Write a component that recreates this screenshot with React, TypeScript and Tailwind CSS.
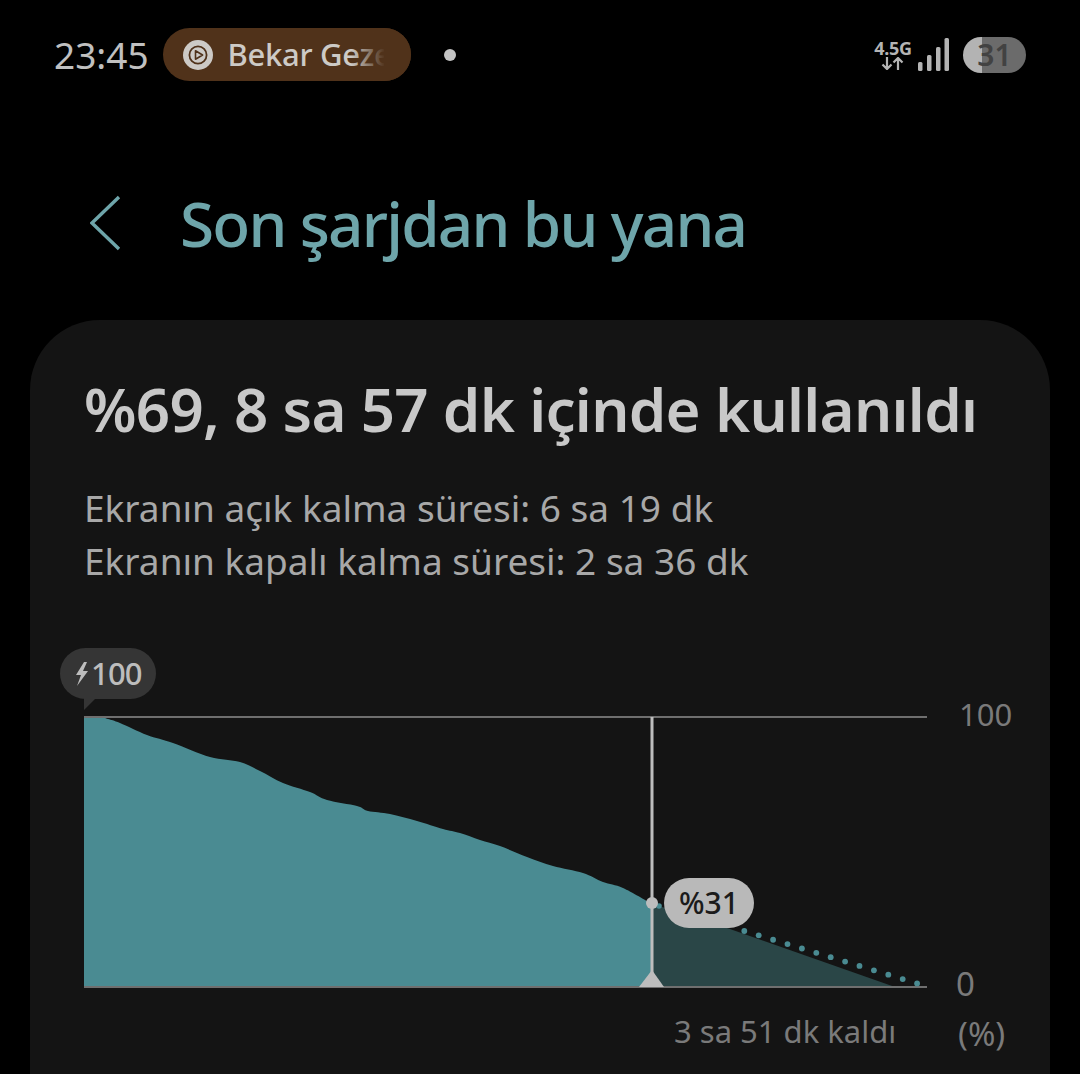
const pts: [number, number][] = [[84,717],[100,717],[108,719],[120,723],[147,735],[173,743],[210,757],[240,762],[260,771],[283,783],[310,792],[327,800],[357,806],[368,811],[390,814],[417,821],[443,829],[460,833],[480,840],[500,846],[527,857],[553,866],[583,873],[603,882],[623,888],[652,904]];
const curve = pts.reduce((acc, p, i) => {
  if (i === 0) return `M${p[0]} ${p[1]}`;
  const p0 = pts[Math.max(i - 2, 0)];
  const p1 = pts[i - 1];
  const p3 = pts[Math.min(i + 1, pts.length - 1)];
  const c1x = p1[0] + (p[0] - p0[0]) / 6;
  const c1y = p1[1] + (p[1] - p0[1]) / 6;
  const c2x = p[0] - (p3[0] - p1[0]) / 6;
  const c2y = p[1] - (p3[1] - p1[1]) / 6;
  return `${acc} C${c1x} ${c1y} ${c2x} ${c2y} ${p[0]} ${p[1]}`;
}, "");
const dots = Array.from({ length: 13 }, (_, i) => ({ x: 744.3 + i * 14.4, y: 931 + i * 4.37 }));

function StatusBar() {
  return (
    <div className="flex h-[109px] items-center pl-[54px] pr-[54px] text-[#c0c0c0]">
      <span className="text-[37px] leading-none">23:45</span>
      <div className="relative ml-[14px] flex h-[53px] w-[248px] items-center overflow-hidden rounded-full bg-[#50321a] pl-[20px]">
        <svg width="30" height="30" viewBox="0 0 30 30" className="shrink-0">
          <circle cx="15" cy="15" r="15" fill="#cdcac6" />
          <circle cx="15" cy="15" r="8.6" fill="none" stroke="#50321a" strokeWidth="1.8" />
          <path d="M12.5 10.8 L19.6 15 L12.5 19.2 Z" fill="none" stroke="#50321a" strokeWidth="1.6" strokeLinejoin="round" />
        </svg>
        <span className="ml-[15px] whitespace-nowrap text-[31px] font-medium leading-none tracking-[-0.3px] text-[#cdcac6]">Bekar Gezer</span>
        <div className="absolute inset-y-0 right-[26px] w-[34px] bg-gradient-to-r from-transparent to-[#50321a]" />
        <div className="absolute inset-y-0 right-0 w-[27px] bg-[#50321a]" />
      </div>
      <div className="ml-[33px] h-[12px] w-[12px] rounded-full bg-[#c4c4c4]" />
      <div className="ml-auto flex items-center">
        <div className="flex w-[42px] flex-col items-center">
          <span className="text-[18px] font-bold leading-[17px] tracking-[-0.3px] text-[#b4b4b4]">4.5G</span>
          <svg width="24" height="13" viewBox="0 0 24 13" fill="none" stroke="#b4b4b4" strokeWidth="2.2">
            <path d="M6 0 V12 M1.5 7.5 L6 12 L10.5 7.5 M17 13 V1 M12.5 5.5 L17 1 L21.5 5.5" />
          </svg>
        </div>
        <svg width="32" height="34" viewBox="0 0 32 34" className="ml-[4px]" fill="#b4b4b4">
          <rect x="0" y="24" width="4.5" height="9" rx="1.5" />
          <rect x="9" y="17" width="4.5" height="16" rx="1.5" />
          <rect x="18" y="9" width="4.5" height="24" rx="1.5" />
          <rect x="26.5" y="0" width="4.5" height="33" rx="1.5" />
        </svg>
        <div className="ml-[13px] flex h-[36px] w-[63px] items-center justify-center rounded-full bg-[linear-gradient(90deg,#b3b3b3_19px,#6b6b6b_19px)] text-[30px] font-semibold leading-[36px] text-[#424242]">31</div>
      </div>
    </div>
  );
}

function Header() {
  return (
    <div className="flex h-[211px] items-start pl-[90px]">
      <svg width="32" height="56" viewBox="0 0 32 56" fill="none" stroke="#6ea5aa" strokeWidth="3.4" className="mt-[86px]">
        <path d="M29 2 L2 28 L29 54" />
      </svg>
      <h1 className="ml-[58px] mt-[72px] text-[62px] font-medium leading-[84px] tracking-[-1.8px] text-[#6ea5aa]">Son şarjdan bu yana</h1>
    </div>
  );
}

function Chart() {
  return (
    <div className="relative mt-[53px] h-[434px] w-full">
      <svg width="1020" height="434" viewBox="30 640 1020 434" className="block">
        <polygon points="652,904 672,910 730,929 895,987 652,987" fill="#2a4647" />
        <path d={`${curve} L652 987 L84 987 Z`} fill="#4a8b92" />
        <line x1="84" y1="717" x2="927" y2="717" stroke="#6f6f6f" strokeWidth="2" />
        <line x1="84" y1="987" x2="927" y2="987" stroke="#6f6f6f" strokeWidth="2" />
        <circle cx="659" cy="906" r="2.8" fill="#4a8b92" />
        {dots.map((d) => (
          <circle key={d.x} cx={d.x} cy={d.y} r="2.9" fill="#4a8b92" />
        ))}
        <line x1="652" y1="717" x2="652" y2="987" stroke="#bdbdbd" strokeWidth="3" />
        <polygon points="652,970 664,987 639,987" fill="#bdbdbd" />
        <circle cx="652" cy="903" r="6" fill="#bdbdbd" />
        <polygon points="84,690 84,710 96,698" fill="#353535" />
      </svg>
      <div className="absolute left-[30px] top-[8px] flex h-[51px] w-[96px] items-center rounded-full bg-[#353535] pl-[15px] text-[31px] font-medium leading-none text-[#bdbdbd]">
        <svg width="14" height="24" viewBox="0 0 14 24" fill="#bdbdbd" className="shrink-0">
          <path d="M9 0 L1 13 H6 L2 24 L13 9 H8 L12 0 Z" />
        </svg>
        <span className="ml-[2px] tracking-[-0.8px]">100</span>
      </div>
      <div className="absolute left-[634px] top-[238px] flex h-[50px] w-[90px] items-center justify-center rounded-[25px] bg-[#b9b9b9] text-[30px] font-medium leading-none text-[#1b1b1b]">%31</div>
      <span className="absolute left-[929px] top-[53px] text-[31px] leading-[42px] text-[#7a7a7a]">100</span>
      <span className="absolute left-[926px] top-[323px] text-[33px] leading-[42px] text-[#7a7a7a]">0</span>
      <span className="absolute left-[644px] top-[370px] text-[31px] leading-[42px] text-[#7a7a7a]">3 sa 51 dk kaldı</span>
      <span className="absolute left-[928px] top-[373px] text-[33px] leading-[42px] text-[#7a7a7a]">(%)</span>
    </div>
  );
}

export default function App() {
  return (
    <div className="h-[1074px] w-[1080px] overflow-hidden bg-black font-['Noto_Sans',sans-serif]">
      <StatusBar />
      <Header />
      <div className="mx-[30px] h-[800px] rounded-t-[70px] bg-[#141414] pt-[47px]">
        <div className="pl-[54px]">
          <h2 className="text-[60px] font-semibold leading-[84px] tracking-[-0.7px] text-[#c8c8c8]">%69, 8 sa 57 dk içinde kullanıldı</h2>
          <p className="mt-[30px] text-[37px] leading-[53px] text-[#a8a8a8]">Ekranın açık kalma süresi: 6 sa 19 dk</p>
          <p className="text-[37px] leading-[53px] text-[#a8a8a8]">Ekranın kapalı kalma süresi: 2 sa 36 dk</p>
        </div>
        <Chart />
      </div>
    </div>
  );
}
